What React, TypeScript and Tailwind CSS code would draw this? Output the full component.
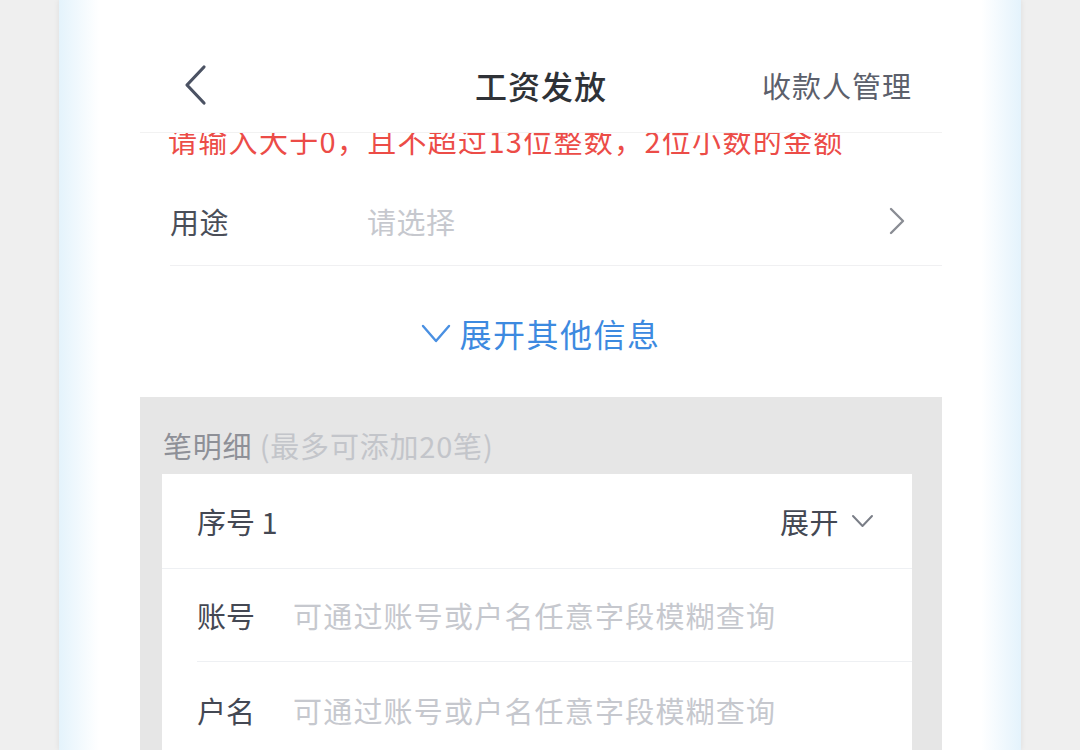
import React from "react";

function BackIcon() {
  return (
    <svg width="24" height="42" viewBox="0 0 24 42" fill="none">
      <path d="M21 3 L4 21 L21 39" stroke="#4b5263" strokeWidth="3.2" strokeLinecap="round" strokeLinejoin="round" />
    </svg>
  );
}

function RightChevron() {
  return (
    <svg width="16" height="28" viewBox="0 0 16 28" fill="none">
      <path d="M2 2 L14 14 L2 26" stroke="#8a8d94" strokeWidth="2.4" strokeLinecap="round" strokeLinejoin="round" />
    </svg>
  );
}

function DownChevron({ w, h, color, sw }: { w: number; h: number; color: string; sw: number }) {
  return (
    <svg width={w} height={h} viewBox={`0 0 ${w} ${h}`} fill="none">
      <path d={`M2 2 L${w / 2} ${h - 2} L${w - 2} 2`} stroke={color} strokeWidth={sw} strokeLinecap="round" strokeLinejoin="round" />
    </svg>
  );
}

export default function App() {
  return (
    <div className="w-[1080px] h-[750px] bg-[#efefef] flex justify-center overflow-hidden font-['Noto_Sans_CJK_SC',sans-serif]">
      <div className="w-[962px] h-full pl-[81px] pr-[79px] bg-[linear-gradient(to_right,#e4f3fc_0px,#ffffff_40px,#ffffff_922px,#e4f3fc_962px)] shadow-[0_0_6px_rgba(0,0,0,0.08)]">
        {/* Header */}
        <div className="h-[133px] pt-[50px] border-b border-[#f2f2f2]">
          <div className="h-[70px] grid grid-cols-[1fr_auto_1fr] items-center">
            <div className="pl-[43px] flex items-center">
              <BackIcon />
            </div>
            <div className="text-[32px] leading-[40px] text-[#2f3237] font-medium tracking-[1px]">工资发放</div>
            <div className="flex justify-end pr-[30px] text-[29px] leading-[40px] text-[#5c606b] tracking-[1px]">收款人管理</div>
          </div>
        </div>

        {/* Body */}
        <div className="h-[617px] overflow-hidden">
          <div className="-mt-[8px] pl-[28px] h-[30px] mb-[3px] text-[29px] leading-[30px] text-[#ec4c47] whitespace-nowrap tracking-[1.3px]">
            请输入大于0，且不超过13位整数，2位小数的金额
          </div>

          <div className="ml-[30px] h-[108px] pt-[18px] flex items-center border-b border-[#f0f0f2]">
            <div className="w-[197px] text-[29px] leading-[40px] text-[#4a4e58] tracking-[0.5px]">用途</div>
            <div className="flex-1 text-[29px] leading-[40px] text-[#c6c8ce] tracking-[0.5px]">请选择</div>
            <div className="pr-[37px] flex items-center">
              <RightChevron />
            </div>
          </div>

          <div className="h-[131px] pt-[3px] flex items-center justify-center">
            <div className="flex items-center gap-[8px]">
              <DownChevron w={30} h={19} color="#4a90e2" sw={2.4} />
              <span className="text-[32px] leading-[40px] text-[#3d8ae0] tracking-[1.5px]">展开其他信息</span>
            </div>
          </div>

          <div className="bg-[#e6e6e6] h-[400px]">
            <div className="pl-[23px] pt-[33px] pb-[14px] h-[77px] text-[29px] leading-[30px] whitespace-nowrap tracking-[0.8px]">
              <span className="text-[#8e9097]">笔明细</span>
              <span className="text-[#c3c5ca]"> (最多可添加20笔)</span>
            </div>
            <div className="ml-[22px] w-[750px] bg-white">
              <div className="h-[95px] pl-[35px] pr-[38px] flex items-center justify-between border-b border-[#eef0f3]">
                <span className="text-[29px] leading-[40px] text-[#444853]">序号 1</span>
                <div className="flex items-center gap-[12px]">
                  <span className="text-[29px] leading-[40px] text-[#444853] tracking-[0.5px]">展开</span>
                  <DownChevron w={23} h={14} color="#7a7e87" sw={2} />
                </div>
              </div>
              <div className="ml-[35px] h-[93px] flex items-center border-b border-[#eef0f3]">
                <span className="w-[96px] text-[29px] leading-[40px] text-[#444853]">账号</span>
                <span className="text-[29px] leading-[40px] text-[#c6c8ce] whitespace-nowrap tracking-[1.2px]">可通过账号或户名任意字段模糊查询</span>
              </div>
              <div className="ml-[35px] h-[95px] flex items-center">
                <span className="w-[96px] text-[29px] leading-[40px] text-[#444853]">户名</span>
                <span className="text-[29px] leading-[40px] text-[#c6c8ce] whitespace-nowrap tracking-[1.2px]">可通过账号或户名任意字段模糊查询</span>
              </div>
            </div>
          </div>
        </div>
      </div>
    </div>
  );
}
